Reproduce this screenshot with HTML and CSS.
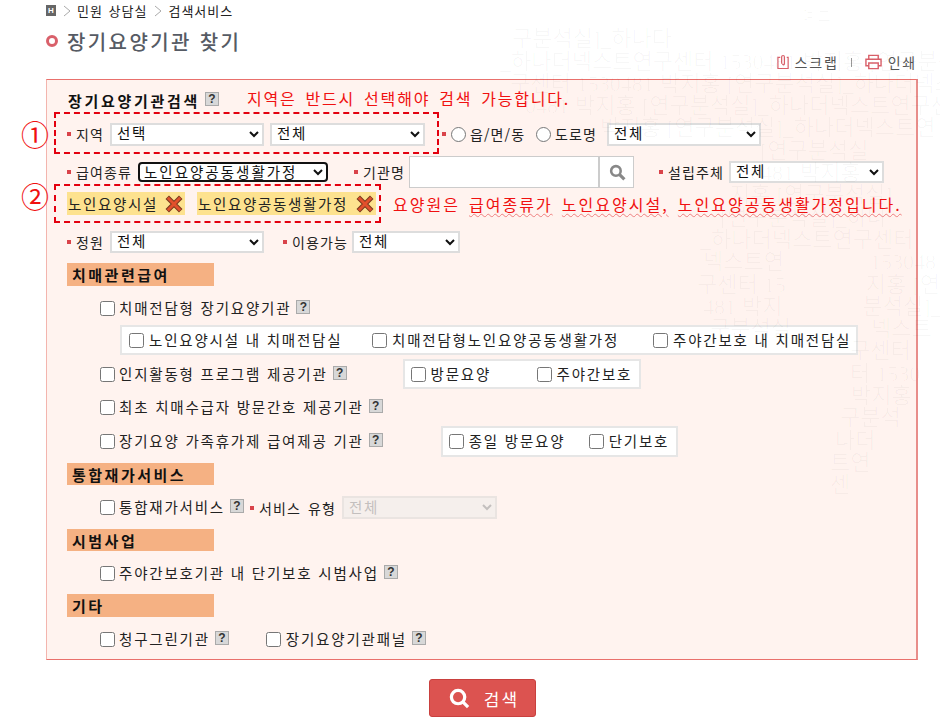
FILE: index.html
```html
<!DOCTYPE html>
<html lang="ko">
<head>
<meta charset="utf-8">
<title>장기요양기관 찾기</title>
<link rel="stylesheet" href="styles.css">
</head>
<body>
<div class="page">
  <nav class="crumbs">
    <span class="home">H</span>
    <svg class="chev" viewBox="0 0 8 12"><path d="M1 1l6 5-6 5" fill="none" stroke="#aaa"/></svg>
    <span>민원 상담실</span>
    <svg class="chev" viewBox="0 0 8 12"><path d="M1 1l6 5-6 5" fill="none" stroke="#aaa"/></svg>
    <span>검색서비스</span>
  </nav>
  <h1 class="title"><span class="ring"></span>장기요양기관 찾기</h1>
  <div class="tools">
    <svg class="tool-ic" viewBox="0 0 14 16"><path d="M3.500 3H1v12h11V3H10.500M5 10V2.500a1.500 1.500 0 0 1 3 0V10a1 1 0 0 1-2 0" fill="none" stroke="#d9606a" stroke-width="1.300"/></svg>
    <span>스크랩</span><i class="sep"></i>
    <svg class="tool-ic print" viewBox="0 0 18 16"><path d="M4 5V1h10v4M4 12H1V5h16v7h-3M4 9h10v6H4z" fill="none" stroke="#d9606a" stroke-width="1.500"/></svg>
    <span>인쇄</span>
  </div>

  <form class="panel">
    <div class="row head-row"><strong>장기요양기관검색</strong><span class="help">?</span><span class="note note-a">지역은 반드시 선택해야 검색 가능합니다.</span></div>

    <div class="row region">
      <label class="lab w-region">지역</label>
      <select class="sel w154"><option>선택</option></select>
      <select class="sel w155 ml6"><option>전체</option></select>
      <i class="dot ml17"></i>
      <input type="radio" class="radio"><span class="lab-text w-emd">읍/면/동</span>
      <input type="radio" class="radio"><span class="lab-text w-road">도로명</span>
      <select class="sel w154"><option>전체</option></select>
    </div>

    <div class="row pay">
      <label class="lab w-pay">급여종류</label>
      <select class="sel focus"><option>노인요양공동생활가정</option></select>
      <label class="lab ml26 w-org">기관명</label>
      <input type="text" class="org"><button type="button" class="find"><svg viewBox="0 0 16 16"><circle cx="6.500" cy="6.500" r="4.500" fill="none" stroke="#888" stroke-width="2.400"/><path d="M10 10l4.500 4.500" stroke="#888" stroke-width="3"/></svg></button>
      <label class="lab ml25 w-est">설립주체</label>
      <select class="sel w155 slim"><option>전체</option></select>
    </div>

    <div class="row tags">
      <span class="tag tag-1">노인요양시설<svg class="x" viewBox="0 0 16 16"><path d="M2 2l12 12M14 2L2 14" stroke="#7a3b20" stroke-width="4.400"/><path d="M2.500 2.500l11 11M13.500 2.500l-11 11" stroke="#e2502c" stroke-width="2.600"/></svg></span>
      <span class="tag tag-2">노인요양공동생활가정<svg class="x" viewBox="0 0 16 16"><path d="M2 2l12 12M14 2L2 14" stroke="#7a3b20" stroke-width="4.400"/><path d="M2.500 2.500l11 11M13.500 2.500l-11 11" stroke="#e2502c" stroke-width="2.600"/></svg></span>
      <span class="note note-b">요양원은 <u>급여종류가</u> <u>노인요양시설,</u> <u>노인요양공동생활가정입니다.</u></span>
    </div>

    <div class="row cap">
      <label class="lab w-region">정원</label>
      <select class="sel w154 slim"><option>전체</option></select>
      <label class="lab ml19 w-avail">이용가능</label>
      <select class="sel w108 slim"><option>전체</option></select>
    </div>

    <h2 class="sec sec-a">치매관련급여</h2>
    <div class="row chk r-a"><input type="checkbox" class="cb"><span class="txt">치매전담형 장기요양기관</span><span class="help">?</span></div>
    <div class="sub sub-a">
      <input type="checkbox" class="cb"><span class="txt w-s1">노인요양시설 내 치매전담실</span>
      <input type="checkbox" class="cb"><span class="txt w-s2">치매전담형노인요양공동생활가정</span>
      <input type="checkbox" class="cb"><span class="txt">주야간보호 내 치매전담실</span>
    </div>
    <div class="row chk r-b">
      <input type="checkbox" class="cb"><span class="txt">인지활동형 프로그램 제공기관</span><span class="help">?</span>
      <div class="sub sub-b">
        <input type="checkbox" class="cb"><span class="txt w-s3">방문요양</span>
        <input type="checkbox" class="cb"><span class="txt">주야간보호</span>
      </div>
    </div>
    <div class="row chk r-c"><input type="checkbox" class="cb"><span class="txt">최초 치매수급자 방문간호 제공기관</span><span class="help">?</span></div>
    <div class="row chk r-d">
      <input type="checkbox" class="cb"><span class="txt">장기요양 가족휴가제 급여제공 기관</span><span class="help">?</span>
      <div class="sub sub-c">
        <input type="checkbox" class="cb"><span class="txt w-s4">종일 방문요양</span>
        <input type="checkbox" class="cb"><span class="txt">단기보호</span>
      </div>
    </div>

    <h2 class="sec sec-b">통합재가서비스</h2>
    <div class="row chk r-e">
      <input type="checkbox" class="cb"><span class="txt">통합재가서비스</span><span class="help">?</span>
      <label class="lab lab-type">서비스 유형</label>
      <select class="sel w155 off" disabled><option>전체</option></select>
    </div>

    <h2 class="sec sec-c">시범사업</h2>
    <div class="row chk r-f"><input type="checkbox" class="cb"><span class="txt">주야간보호기관 내 단기보호 시범사업</span><span class="help">?</span></div>

    <h2 class="sec sec-d">기타</h2>
    <div class="row chk r-g">
      <input type="checkbox" class="cb"><span class="txt">청구그린기관</span><span class="help">?</span>
      <input type="checkbox" class="cb cb-panel"><span class="txt">장기요양기관패널</span><span class="help">?</span>
    </div>

    <div class="mark box-1"></div>
    <div class="mark box-2"></div>
    <span class="num num-1">①</span>
    <span class="num num-2">②</span>
  </form>

  <div class="actions">
    <button type="button" class="go"><svg viewBox="0 0 22 22"><circle cx="9.500" cy="9.500" r="7" fill="none" stroke="#fff" stroke-width="3.400"/><path d="M14.500 14.500l5.500 5.500" stroke="#fff" stroke-width="3.400"/></svg>검색</button>
  </div>

  <div class="wm" aria-hidden="true">
    <div class="l l1">≡ 여 그</div>
    <div class="l l2">구분석실]_하나다</div>
    <div class="l l3">_하나더넥스트연구센터/1530481/박지홍/[연구분석실]_하나더넥스트연구센터</div>
    <div class="l l4">구센터/1530481/박지홍/[연구분석실]_하나더넥스트연구센터</div>
    <div class="l l5">0481/박지홍/[연구분석실]_하나더넥스트연구센터</div>
    <div class="l l6">박지홍/[연구분석실]_하나더넥스트연</div>
    <div class="l l7">[연구분석실</div>
    <div class="l l8">0481/박지홍</div>
    <div class="l l9">지홍/[연구분석실]</div>
    <div class="l l10">[연구분석실]_하나</div>
    <div class="l l11">_하나더넥스트연구센터/</div>
    <div class="l l12">넥스트연<b></b>/1530481/박</div>
    <div class="l l13">구센터/15<b></b>지홍/[연구</div>
    <div class="l l14">481/박지<b></b>분석실]_하</div>
    <div class="l l15">구분석실<b></b>넥스트</div>
    <div class="l l16">구센터</div>
    <div class="l l17">터/1530</div>
    <div class="l l18">/박지홍</div>
    <div class="l l19">구분석</div>
    <div class="l l20">나더</div>
    <div class="l l21">트연</div>
    <div class="l l22">센</div>
  </div>
</div>
</body>
</html>
```

FILE: styles.css
```css
* { box-sizing: border-box; }
html, body { margin: 0; padding: 0; background: #fff; }
body { font-family: "Noto Sans CJK KR", "Noto Sans", sans-serif; font-size: 14px; color: #222; }
.page { position: relative; width: 940px; height: 719px; overflow: hidden; padding-left: 46px; }

.crumbs { height: 21px; display: flex; align-items: center; font-size: 13px; color: #222; letter-spacing: 1px; word-spacing: 1px; }
.home { width: 10px; height: 11px; background: #666; color: #fff; font: bold 8px/11px "Liberation Sans", sans-serif; text-align: center; letter-spacing: 0; }
.chev { width: 8px; height: 12px; margin: 0 6px 0 7px; }

.title { margin: 7px 0 0; height: 26px; display: flex; align-items: center; font-size: 20px; font-weight: 500; color: #565b64; letter-spacing: 2.400px; }
.ring { width: 12px; height: 12px; border: 3.500px solid #d9606a; border-radius: 50%; margin-right: 9px; }

.tools { position: absolute; top: 52px; right: 23px; display: flex; align-items: center; font-size: 14px; color: #555; letter-spacing: 1.800px; }
.tool-ic { width: 13px; height: 16px; margin-right: 5px; }
.tool-ic.print { width: 17px; margin-right: 6px; }
.sep { width: 1px; height: 9px; background: #999; margin: 0 13px 0 12px; }

.panel { position: relative; width: 872px; height: 581px; margin-top: 25px; background: #fff3ef; border: 1px solid #e9706c; border-width: 1px 2px 1px 1px; border-right-color: #e88d8a; border-left-color: #f3b5ae; padding-left: 20px; }

.row { display: flex; align-items: center; }
.head-row { height: 40px; }
.head-row strong { font-size: 15px; font-weight: 700; color: #111; letter-spacing: 2.700px; margin-left: 1px; }
.note { color: #f01010; font-size: 16px; letter-spacing: 1.800px; word-spacing: 2.700px; }
.note-a { margin-left: 28px; margin-top: -4px; }
.note-b { margin-left: 17px; white-space: nowrap; letter-spacing: 2px; }
.note-b u { text-decoration: underline wavy #ee8080 1px; text-underline-offset: 2px; }

.help { flex: none; width: 14px; height: 14px; margin: -3px 0 0 5px; background: #d8d8d8; border: 1px solid #aaa; color: #333; font: bold 12px/12px "Liberation Sans", sans-serif; text-align: center; }

.lab, .lab-text { display: flex; align-items: center; flex: none; color: #222; font-size: 14px; letter-spacing: 1.100px; word-spacing: 2px; white-space: nowrap; }
.lab::before { content: ""; width: 4px; height: 4px; background: #d9434a; margin-right: 5px; flex: none; }
.w-region { width: 43px; }
.w-pay { width: 71px; }
.w-org { width: 55px; }
.w-est { width: 70px; }
.w-avail { width: 69px; }
.ml6 { margin-left: 6px; }
.ml17 { margin-left: 17px; }
.ml19 { margin-left: 19px; }
.ml25 { margin-left: 25px; }
.ml26 { margin-left: 26px; }

.sel { height: 23px; background: #fff; border: 2px solid #ddd; border-radius: 0; font: 14.500px "Liberation Sans", "Noto Sans CJK KR", sans-serif; letter-spacing: 1.660px; color: #111; padding: 0 0 0 1px; flex: none; }
.w154 { width: 154px; }
.w155 { width: 155px; }
.w108 { width: 108px; }
.slim { height: 22px; }
.focus { width: 190px; height: 20px; border: 2px solid #111; border-radius: 4px; padding: 0; letter-spacing: 2px; }
.off { background: #f2eeec; color: #aaa; border-color: #e2dedc; }

.dot { width: 4px; height: 4px; background: #d9434a; margin-right: 5px; flex: none; }
.radio { width: 15px; height: 15px; margin: 0 4px 0 0; flex: none; }
.txt { font-size: 14.500px; letter-spacing: 1.800px; white-space: nowrap; flex: none; margin-bottom: 2px; }
.w-emd { width: 66px; }
.w-road { width: 52px; }

.region { height: 28px; }
.pay { height: 40px; margin-top: 4px; }
.org { width: 190px; height: 32px; background: #fff; border: 1px solid #ccc; flex: none; }
.find { width: 35px; height: 32px; margin: 0; padding: 0 0 0 1px; background: #fff; border: 1px solid #ccc; border-left: 1px solid #ccc; display: flex; align-items: center; justify-content: center; flex: none; }
.find svg { width: 17px; height: 17px; }

.tags { height: 23px; }
.tag { display: flex; align-items: center; height: 23px; padding-left: 1px; background: #fde28f; font-size: 14.500px; letter-spacing: 1.660px; color: #222; flex: none; white-space: nowrap; justify-content: space-between; padding-right: 2px; }
.tag-1 { width: 118px; }
.tag-2 { width: 179px; margin-left: 12px; }
.x { width: 18px; height: 18px; flex: none; }

.cap { height: 28px; margin-top: 13px; }

.sec { width: 147px; margin: 0; background: #f5b183; color: #111; font-size: 15px; font-weight: 700; letter-spacing: 2.500px; padding-left: 5px; display: flex; align-items: center; }
.sec-a { height: 23px; margin-top: 7px; }
.sec-b { height: 22px; margin-top: 6px; }
.sec-c { height: 22px; margin-top: 10px; }
.sec-d { height: 23px; margin-top: 10px; }

.chk { padding-left: 33px; }
.cb { flex: none; width: 15px; height: 15px; margin: 0 4px 0 0; }
.r-a { height: 22px; margin-top: 11px; }
.sub { display: inline-flex; align-items: center; background: #fff; border: 2px solid #e6e6e6; height: 30px; flex: none; }
.sub .cb { margin-right: 5px; }
.sub-a { width: 738px; margin: 6px 0 0 53px; padding-left: 7px; display: flex; }
.w-s1 { width: 223px; }
.w-s2 { width: 261px; }
.w-s3 { width: 106px; }
.w-s4 { width: 120px; }
.r-b { height: 30px; margin-top: 4px; }
.sub-b { width: 238px; margin-left: 56px; padding-left: 6px; }
.r-c { height: 22px; margin-top: 7px; }
.r-d { height: 31px; margin-top: 8px; }
.sub-c { width: 237px; margin-left: 58px; padding-left: 6px; height: 31px; }
.r-e { height: 23px; margin-top: 11px; }
.lab-type { margin: 0 6px 0 6px; }
.r-f { height: 22px; margin-top: 11px; }
.r-g { height: 22px; margin-top: 11px; }
.cb-panel { margin: 0 5px 0 37px; }

.mark { position: absolute; border: 2px dashed #e3000f; }
.box-1 { left: 7px; top: 32px; width: 385px; height: 42px; }
.box-2 { left: 7px; top: 104px; width: 327px; height: 39px; }
.num { position: absolute; left: -26px; color: #f01010; font: 28px/30px "Noto Sans CJK KR", sans-serif; }
.num-1 { top: 39px; }
.num-2 { top: 101px; }

.actions { margin-top: 19px; padding-left: 383px; }
.go { width: 107px; height: 38px; padding: 0 0 0 3px; background: #dc5350; border: 1px solid #c9403e; border-radius: 3px; color: #fff; font: 17px "Noto Sans CJK KR", sans-serif; letter-spacing: 2px; display: flex; align-items: center; justify-content: center; gap: 14px; }
.go svg { width: 21px; height: 21px; }

.wm { position: absolute; left: 0; top: 6px; width: 940px; pointer-events: none; color: rgba(0,0,0,.03); font: 22px/22.300px "Liberation Serif", "Noto Sans CJK KR", serif; white-space: nowrap; }
.l { height: 22.300px; }
.l b { display: inline-block; width: 80px; }
.l1 { padding-left: 790px; font-size: 14px; }
.l2 { padding-left: 512px; }
.l3 { padding-left: 500px; }
.l4 { padding-left: 510px; }
.l5 { padding-left: 525px; }
.l6 { padding-left: 600px; }
.l7 { padding-left: 760px; }
.l8 { padding-left: 750px; }
.l9 { padding-left: 730px; }
.l10 { padding-left: 720px; }
.l11 { padding-left: 700px; }
.l12 { padding-left: 703px; }
.l13 { padding-left: 697px; }
.l14 { padding-left: 703px; }
.l15 { padding-left: 710px; }
.l16 { padding-left: 850px; }
.l17 { padding-left: 850px; }
.l18 { padding-left: 845px; }
.l19 { padding-left: 840px; }
.l20 { padding-left: 835px; }
.l21 { padding-left: 830px; }
.l22 { padding-left: 830px; }
```
